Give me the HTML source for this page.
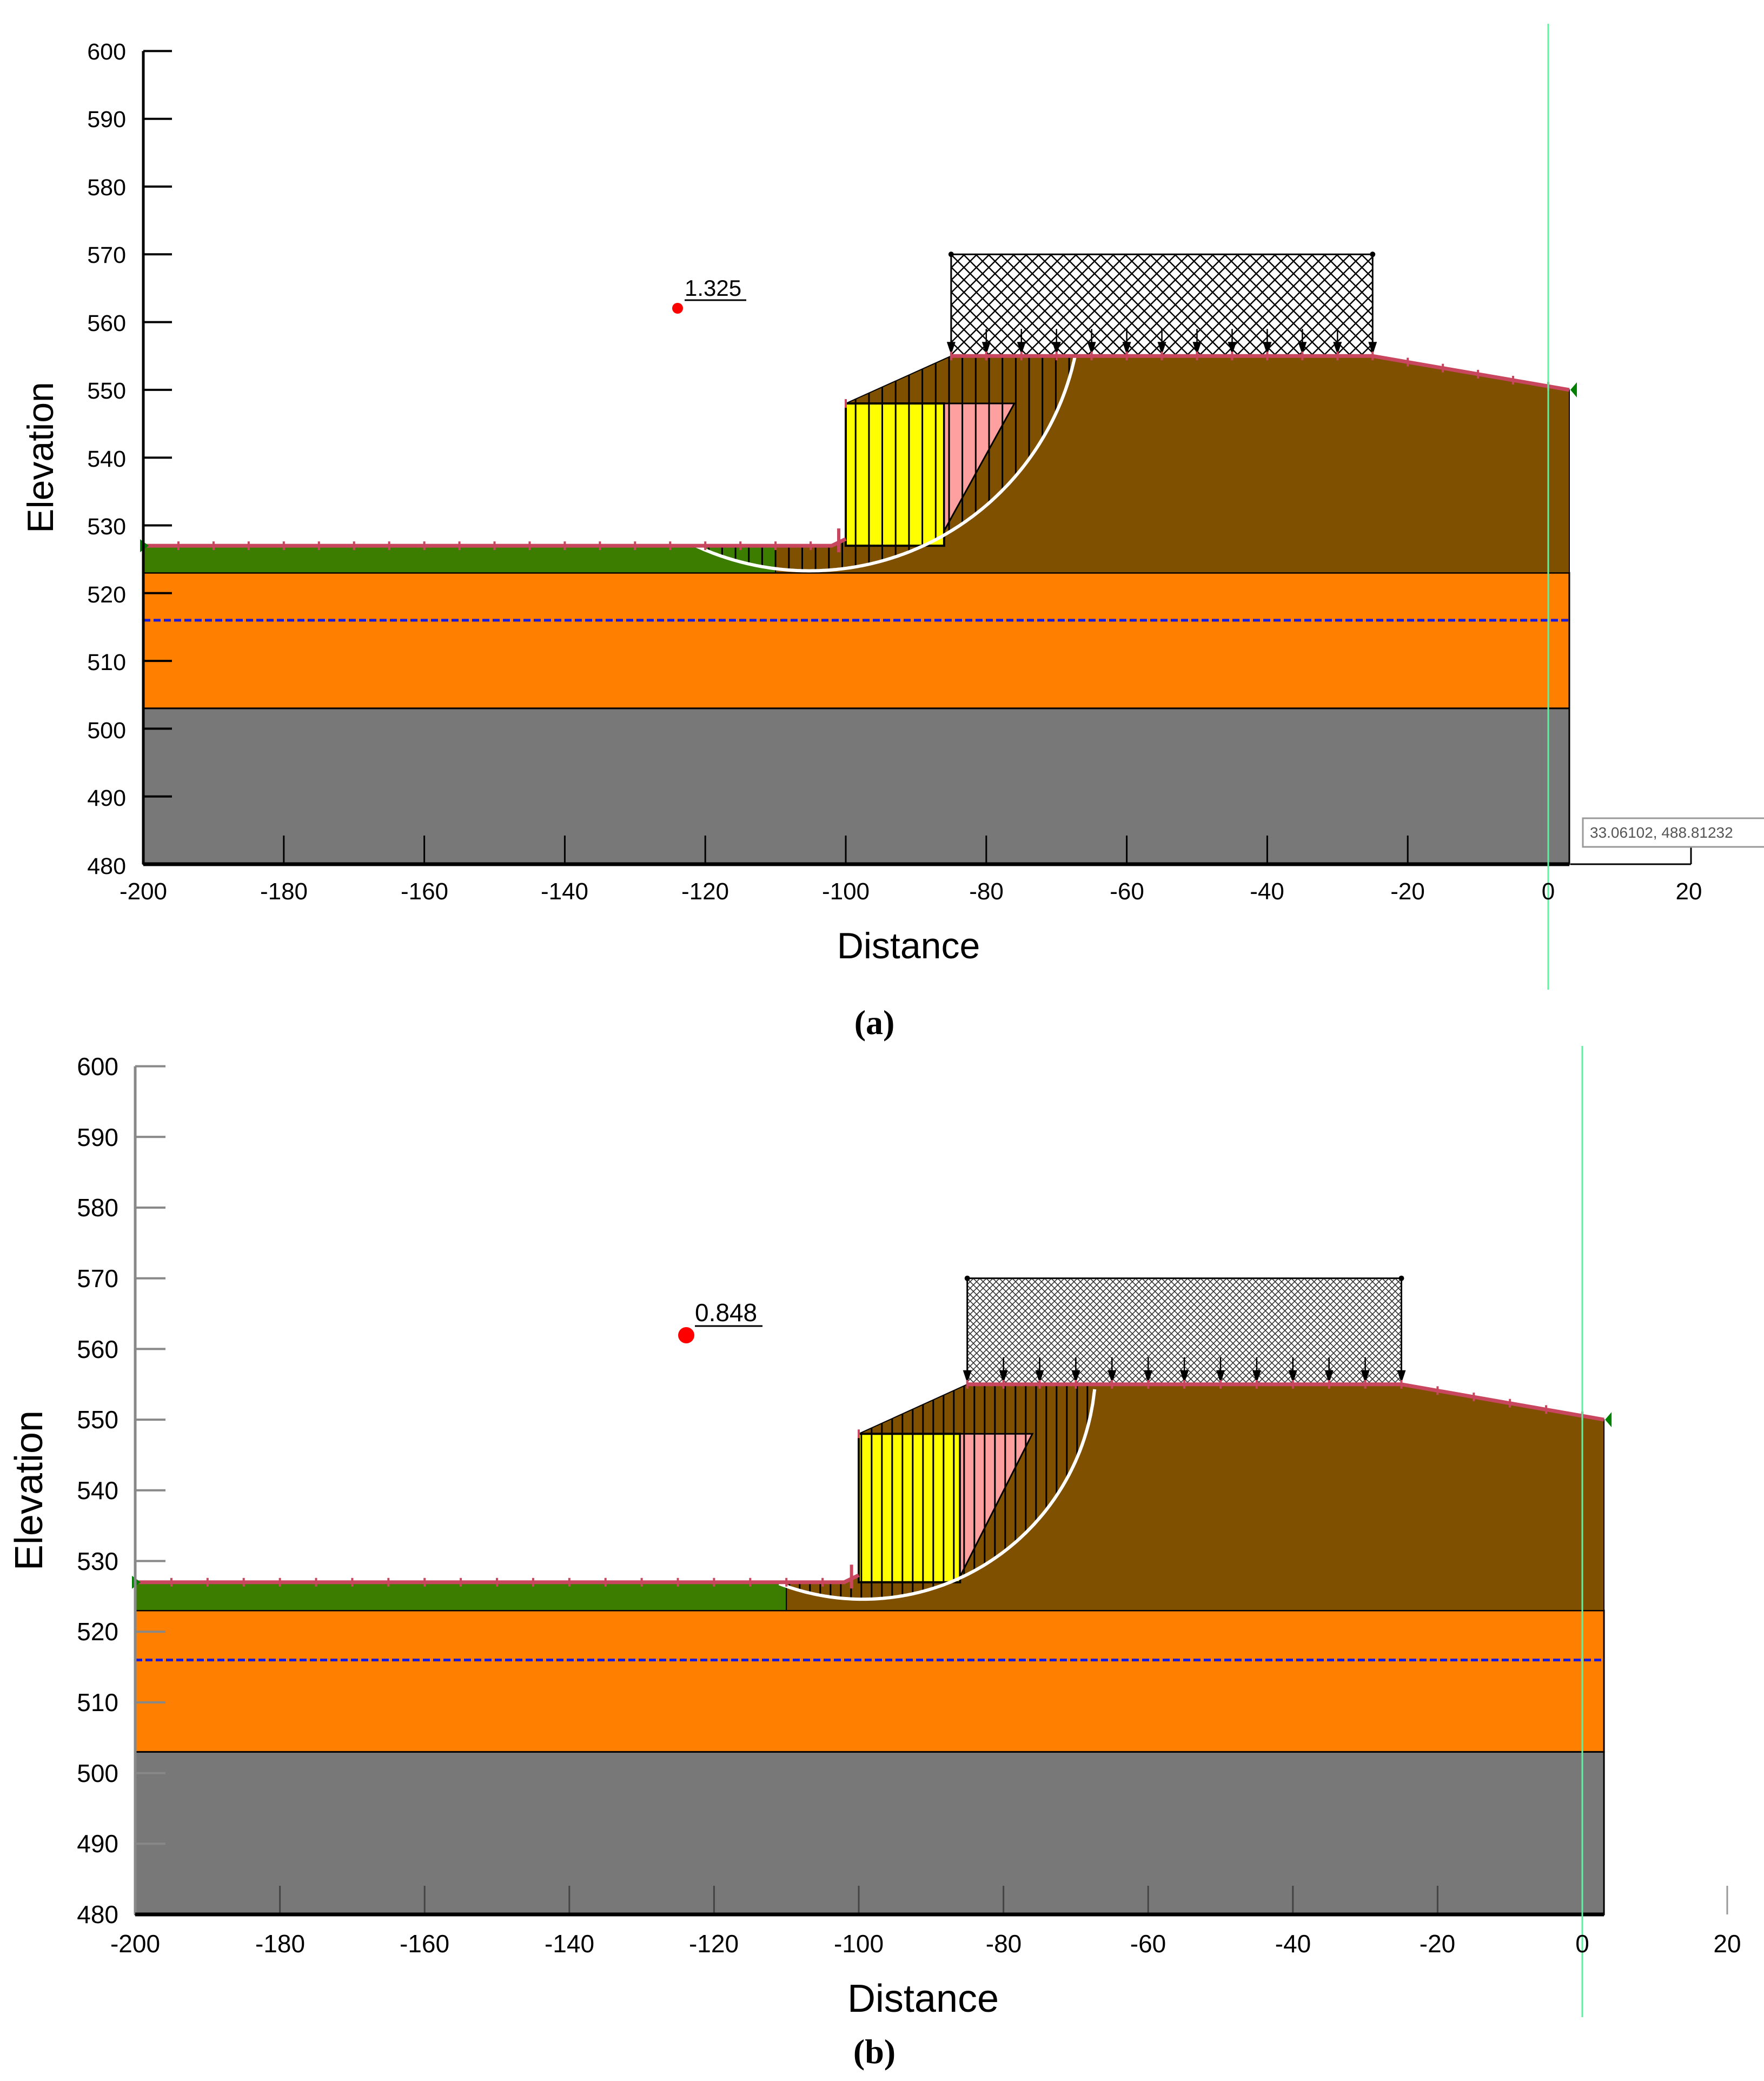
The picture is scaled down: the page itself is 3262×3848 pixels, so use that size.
<!DOCTYPE html>
<html><head><meta charset="utf-8"><style>
html,body{margin:0;padding:0;background:#fff;}
svg{display:block}
text{font-family:"Liberation Sans",Arial,sans-serif;}
</style></head><body>
<svg id="s" width="3262" height="3848" viewBox="0 0 3262 3848" xmlns="http://www.w3.org/2000/svg">
<defs>
<pattern id="hA" width="23" height="23" patternUnits="userSpaceOnUse">
<rect width="23" height="23" fill="#fff"/>
<path d="M0 0L23 23M23 0L0 23" stroke="#000" stroke-width="2.5"/>
</pattern>
<pattern id="hB" width="12" height="12" patternUnits="userSpaceOnUse">
<rect width="12" height="12" fill="#fff"/>
<path d="M0 0L12 12M12 0L0 12" stroke="#333" stroke-width="1.6"/>
</pattern>
</defs>
<g id="ga"></g>
<g id="gb"></g>

<!-- Panel A text -->
<g font-size="43" fill="#000" text-anchor="end">
<text x="233" y="110">600</text><text x="233" y="235">590</text><text x="233" y="361">580</text>
<text x="233" y="486">570</text><text x="233" y="612">560</text><text x="233" y="737">550</text>
<text x="233" y="863">540</text><text x="233" y="988">530</text><text x="233" y="1114">520</text>
<text x="233" y="1239">510</text><text x="233" y="1365">500</text><text x="233" y="1490">490</text>
<text x="233" y="1616">480</text>
</g>
<g font-size="44" fill="#000" text-anchor="middle">
<text x="265" y="1663">-200</text><text x="525" y="1663">-180</text><text x="785" y="1663">-160</text>
<text x="1044" y="1663">-140</text><text x="1304" y="1663">-120</text><text x="1564" y="1663">-100</text>
<text x="1824" y="1663">-80</text><text x="2084" y="1663">-60</text><text x="2343" y="1663">-40</text>
<text x="2603" y="1663">-20</text><text x="2863" y="1663">0</text><text x="3123" y="1663">20</text>
</g>
<text x="1680" y="1772" font-size="68" text-anchor="middle">Distance</text>
<text transform="translate(98,846) rotate(-90)" font-size="68" text-anchor="middle">Elevation</text>
<text x="1617" y="1912" font-size="64" font-weight="bold" text-anchor="middle" style="font-family:'Liberation Serif',serif">(a)</text>
<text x="1266" y="547" font-size="42">1.325</text>
<text x="2940" y="1549" font-size="28" fill="#555">33.06102, 488.81232</text>

<!-- Panel B text -->
<g font-size="46" fill="#000" text-anchor="end">
<text x="219" y="1988">600</text><text x="219" y="2119">590</text><text x="219" y="2249">580</text>
<text x="219" y="2380">570</text><text x="219" y="2511">560</text><text x="219" y="2641">550</text>
<text x="219" y="2772">540</text><text x="219" y="2903">530</text><text x="219" y="3033">520</text>
<text x="219" y="3164">510</text><text x="219" y="3295">500</text><text x="219" y="3425">490</text>
<text x="219" y="3556">480</text>
</g>
<g font-size="46" fill="#000" text-anchor="middle">
<text x="250" y="3610">-200</text><text x="518" y="3610">-180</text><text x="785" y="3610">-160</text>
<text x="1053" y="3610">-140</text><text x="1320" y="3610">-120</text><text x="1588" y="3610">-100</text>
<text x="1856" y="3610">-80</text><text x="2123" y="3610">-60</text><text x="2391" y="3610">-40</text>
<text x="2658" y="3610">-20</text><text x="2926" y="3610">0</text><text x="3194" y="3610">20</text>
</g>
<text x="1707" y="3720" font-size="72" text-anchor="middle">Distance</text>
<text transform="translate(78,2756) rotate(-90)" font-size="72" text-anchor="middle">Elevation</text>
<text x="1617" y="3815" font-size="64" font-weight="bold" text-anchor="middle" style="font-family:'Liberation Serif',serif">(b)</text>
<text x="1285" y="2443" font-size="46">0.848</text>
</svg>
<script>
(function(){
var NS="http://www.w3.org/2000/svg";
function el(g,tag,a){var e=document.createElementNS(NS,tag);for(var k in a)e.setAttribute(k,a[k]);g.appendChild(e);return e;}
function panel(g,c){
 var X=function(u){return c.x0+c.sx*u;}, Y=function(v){return c.y480-c.sy*(v-480);};
 function pts(a){return a.map(function(p){return X(p[0]).toFixed(1)+","+Y(p[1]).toFixed(1);}).join(" ");}
 // gray
 el(g,"polygon",{points:pts([[-200,503],[3,503],[3,480],[-200,480]]),fill:"#787878",stroke:"#000","stroke-width":3});
 el(g,"polygon",{points:pts([[-200,523],[3,523],[3,503],[-200,503]]),fill:"#ff8000",stroke:"#000","stroke-width":3});
 el(g,"polygon",{points:pts([[-200,527],[c.gEnd,527],[c.gEnd,523],[-200,523]]),fill:"#3c7d00",stroke:"#000","stroke-width":2});
 var brown=[[c.gEnd,523],[c.gEnd,527],[-102,527],[-100,528],[-100,548],[-85,555],[-25,555],[3,550],[3,523]];
 el(g,"polygon",{points:pts(brown),fill:"#7f5000",stroke:"#000","stroke-width":2});
 // yellow and pink
 el(g,"polygon",{points:pts([[-100,548],[-86,548],[-86,527],[-100,527]]),fill:"#ffff00",stroke:"#000","stroke-width":4});
 el(g,"polygon",{points:pts([[-86,548],[-76,548],[-86,c.pinkTip],[-86,c.pinkTip]]),fill:"#ffa0a0",stroke:"#000","stroke-width":3});
 // circle through 3 points (pixel space)
 var P=c.arc.map(function(p){return [X(p[0]),Y(p[1])];});
 var ax=P[0][0],ay=P[0][1],bx=P[1][0],by=P[1][1],cx=P[2][0],cy=P[2][1];
 var d=2*(ax*(by-cy)+bx*(cy-ay)+cx*(ay-by));
 var ux=((ax*ax+ay*ay)*(by-cy)+(bx*bx+by*by)*(cy-ay)+(cx*cx+cy*cy)*(ay-by))/d;
 var uy=((ax*ax+ay*ay)*(cx-bx)+(bx*bx+by*by)*(ax-cx)+(cx*cx+cy*cy)*(bx-ax))/d;
 var R=Math.hypot(ax-ux,ay-uy);
 function arcY(px){var dx=px-ux;return uy+Math.sqrt(Math.max(0,R*R-dx*dx));}
 function groundV(u){if(u<-102)return 527;if(u<-100)return 527+(u+102)/2;if(u<-85)return 548+(u+100)*7/15;if(u<-25)return 555;return 555-(u+25)*5/28;}
 // slices
 var s="";
 for(var u=c.arc[0][0]+c.step;u<c.arc[2][0];u+=c.step){
  var px=X(u),top=Y(groundV(u)),bot=arcY(px);
  if(bot>top) s+="M"+px.toFixed(1)+" "+top.toFixed(1)+"V"+bot.toFixed(1);
 }
 el(g,"path",{d:s,stroke:"#000","stroke-width":3,fill:"none"});
 // arc
 var a="";
 for(var px=P[0][0];px<=P[2][0];px+=4){a+=(a?"L":"M")+px.toFixed(1)+" "+arcY(px).toFixed(1);}
 a+="L"+P[2][0].toFixed(1)+" "+P[2][1].toFixed(1);
 el(g,"path",{d:a,stroke:"#fff","stroke-width":6,fill:"none"});
 // water line
 el(g,"line",{x1:X(-200),y1:Y(516),x2:X(3),y2:Y(516),stroke:"#1a1ad8","stroke-width":5,"stroke-dasharray":"13 6"});
 // load box
 el(g,"rect",{x:X(-85),y:Y(570),width:X(-25)-X(-85),height:Y(555)-Y(570),fill:c.hatch,stroke:"#000","stroke-width":3});
 [[-85,570],[-25,570]].forEach(function(p){el(g,"circle",{cx:X(p[0]),cy:Y(p[1]),r:5,fill:"#000"});});
 // arrows
 var ar="";
 for(var u=-85;u<=-25;u+=5){var x=X(u),yb=Y(555)-2;ar+="M"+(x-8)+" "+(yb-24)+"L"+(x+8)+" "+(yb-24)+"L"+x+" "+yb+"Z";}
 el(g,"path",{d:ar,fill:"#000"});
 var sh="";for(var u=-85;u<=-25;u+=5){var x=X(u);sh+="M"+x+" "+(Y(555)-50)+"V"+(Y(555)-10);}
 el(g,"path",{d:sh,stroke:"#000","stroke-width":2.5});
 // pink surface lines
 el(g,"polyline",{points:pts([[-200,527],[-102,527],[-100,528]]),fill:"none",stroke:"#c8475f","stroke-width":7});
 el(g,"polyline",{points:pts([[-85,555],[-25,555],[3,550]]),fill:"none",stroke:"#c8475f","stroke-width":7});
 var tk="";
 for(var u=-200;u<=-100;u+=5){var x=X(u),y=Y(groundV(u));tk+="M"+x+" "+(y-8)+"V"+(y+8);}
 for(var u=-85;u<=3;u+=5){var x=X(u),y=Y(groundV(u));tk+="M"+x+" "+(y-8)+"V"+(y+8);}
 el(g,"path",{d:tk,stroke:"#c8475f","stroke-width":4});
 var xm=X(-101),ym=Y(527.8);
 el(g,"path",{d:"M"+xm+" "+(ym-22)+"V"+(ym+22),stroke:"#c8475f","stroke-width":6});
 // green markers
 el(g,"path",{d:"M"+(X(-200)-6)+" "+(Y(527)-12)+"L"+(X(-200)+10)+" "+Y(527)+"L"+(X(-200)-6)+" "+(Y(527)+12)+"Z",fill:"#008000"});
 el(g,"path",{d:"M"+(X(3)+14)+" "+(Y(550)-14)+"L"+(X(3)+2)+" "+Y(550)+"L"+(X(3)+14)+" "+(Y(550)+14)+"Z",fill:"#008000"});
 // axes
 el(g,"line",{x1:X(-200),y1:Y(600),x2:X(-200),y2:Y(480),stroke:c.axc,"stroke-width":5});
 var yt="";for(var v=490;v<=600;v+=10){yt+="M"+X(-200)+" "+Y(v)+"H"+(X(-200)+c.tl);}
 el(g,"path",{d:yt,stroke:c.axc,"stroke-width":4});
 var xt="";for(var u=-180;u<=0;u+=20){xt+="M"+X(u)+" "+Y(480)+"V"+(Y(480)-53);}
 el(g,"path",{d:xt,stroke:c.tkc,"stroke-width":3});
 el(g,"line",{x1:X(-200),y1:Y(480),x2:X(3),y2:Y(480),stroke:"#000","stroke-width":7});
 // red dot
 el(g,"circle",{cx:c.dot[0],cy:c.dot[1],r:c.dot[2],fill:"#f00"});
 el(g,"line",{x1:c.ul[0],y1:c.ul[1],x2:c.ul[2],y2:c.ul[1],stroke:"#000","stroke-width":3});
 // green vertical
 el(g,"line",{x1:X(0),y1:c.gv[0],x2:X(0),y2:c.gv[1],stroke:"#5ff0a0","stroke-width":3});
}
var ga=document.getElementById("ga"),gb=document.getElementById("gb");
panel(ga,{x0:2863,sx:12.99,y480:1598,sy:12.53,gEnd:-110,pinkTip:529.2,
 arc:[[-121.4,527],[-105.5,523.3],[-67.4,554.8]],step:1.9,hatch:"url(#hA)",axc:"#000",tkc:"#000",tl:53,
 dot:[1253,570,10],ul:[1266,555,1380],gv:[44,1830]});
panel(gb,{x0:2926,sx:13.38,y480:3540,sy:13.07,gEnd:-110,pinkTip:527.8,
 arc:[[-111,526.8],[-99,524.6],[-67.4,554.3]],step:1.42,hatch:"url(#hB)",axc:"#888",tkc:"#444",tl:56,
 dot:[1269,2469,15],ul:[1285,2452,1410],gv:[1934,3730]});
// panel a tooltip box + extended axis
el(ga,"line",{x1:2904,y1:1598,x2:3127,y2:1598,stroke:"#000","stroke-width":3});
el(ga,"line",{x1:3127,y1:1566,x2:3127,y2:1598,stroke:"#000","stroke-width":3});
el(ga,"rect",{x:2927,y:1513,width:340,height:53,fill:"#fff",stroke:"#999","stroke-width":3});
// panel b x=20 tick
el(gb,"line",{x1:3194,y1:3487,x2:3194,y2:3540,stroke:"#999","stroke-width":3});
// bring static texts above the geometry
var s=document.getElementById("s");
Array.prototype.slice.call(s.children).forEach(function(n){if(n.tagName!=="defs"&&n.id!=="ga"&&n.id!=="gb")s.appendChild(n);});
})();
</script>
</body></html>
